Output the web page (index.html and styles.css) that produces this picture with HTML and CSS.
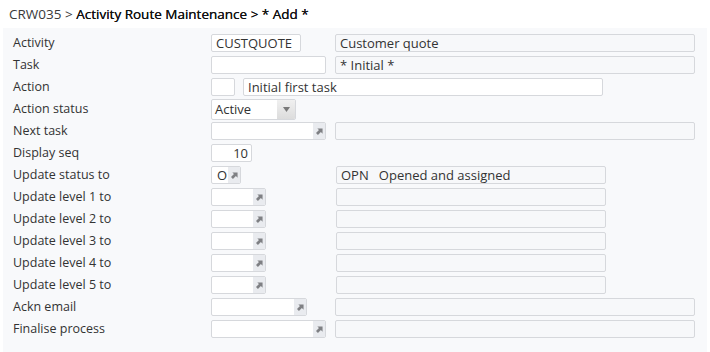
FILE: index.html
```html
<!DOCTYPE html>
<html>
<head>
<meta charset="utf-8">
<link rel="stylesheet" href="styles.css">
</head>
<body>
<div class="crumb"><span class="prog">CRW035 &gt;</span> <span class="title">Activity Route Maintenance &gt; * Add *</span></div>
<div class="panel">
  <div class="row"><div class="lbl">Activity</div><div class="code"><div class="inp w90">CUSTQUOTE</div></div><div class="desc"><div class="ro w360">Customer quote</div></div></div>
  <div class="row"><div class="lbl">Task</div><div class="code"><div class="inp w115"></div></div><div class="desc"><div class="ro w360">* Initial *</div></div></div>
  <div class="row"><div class="lbl">Action</div><div class="span"><div class="inp w24"></div><div class="inp w360">Initial first task</div></div></div>
  <div class="row"><div class="lbl">Action status</div><div class="code"><div class="sel"><span class="seltext">Active</span><span class="selbtn"><svg width="7" height="5" viewBox="0 0 7 5"><path d="M0 0H7L3.5 5Z" fill="#7a7a7a"/></svg></span></div></div></div>
  <div class="row"><div class="lbl">Next task</div><div class="code"><div class="look w115"><span class="lt"></span><span class="lb"><svg class="arr" viewBox="0 0 8 8"><path d="M1.5 0.5H7.5V6.5L5.6 4.6 2.2 8 0 5.8 3.4 2.4Z"/></svg></span></div></div><div class="desc"><div class="ro w360"></div></div></div>
  <div class="row"><div class="lbl">Display seq</div><div class="code"><div class="inp w41 num">10</div></div></div>
  <div class="row"><div class="lbl">Update status to</div><div class="code"><div class="look w30"><span class="lt">O</span><span class="lb"><svg class="arr" viewBox="0 0 8 8"><path d="M1.5 0.5H7.5V6.5L5.6 4.6 2.2 8 0 5.8 3.4 2.4Z"/></svg></span></div></div><div class="desc"><div class="ro w270 sh">OPN&nbsp;&nbsp; Opened and assigned</div></div></div>
  <div class="row"><div class="lbl">Update level 1 to</div><div class="code"><div class="look w55"><span class="lt"></span><span class="lb"><svg class="arr" viewBox="0 0 8 8"><path d="M1.5 0.5H7.5V6.5L5.6 4.6 2.2 8 0 5.8 3.4 2.4Z"/></svg></span></div></div><div class="desc"><div class="ro w270 sh"></div></div></div>
  <div class="row"><div class="lbl">Update level 2 to</div><div class="code"><div class="look w55"><span class="lt"></span><span class="lb"><svg class="arr" viewBox="0 0 8 8"><path d="M1.5 0.5H7.5V6.5L5.6 4.6 2.2 8 0 5.8 3.4 2.4Z"/></svg></span></div></div><div class="desc"><div class="ro w270 sh"></div></div></div>
  <div class="row"><div class="lbl">Update level 3 to</div><div class="code"><div class="look w55"><span class="lt"></span><span class="lb"><svg class="arr" viewBox="0 0 8 8"><path d="M1.5 0.5H7.5V6.5L5.6 4.6 2.2 8 0 5.8 3.4 2.4Z"/></svg></span></div></div><div class="desc"><div class="ro w270 sh"></div></div></div>
  <div class="row"><div class="lbl">Update level 4 to</div><div class="code"><div class="look w55"><span class="lt"></span><span class="lb"><svg class="arr" viewBox="0 0 8 8"><path d="M1.5 0.5H7.5V6.5L5.6 4.6 2.2 8 0 5.8 3.4 2.4Z"/></svg></span></div></div><div class="desc"><div class="ro w270 sh"></div></div></div>
  <div class="row"><div class="lbl">Update level 5 to</div><div class="code"><div class="look w55"><span class="lt"></span><span class="lb"><svg class="arr" viewBox="0 0 8 8"><path d="M1.5 0.5H7.5V6.5L5.6 4.6 2.2 8 0 5.8 3.4 2.4Z"/></svg></span></div></div><div class="desc"><div class="ro w270 sh"></div></div></div>
  <div class="row"><div class="lbl">Ackn email</div><div class="code"><div class="look w96"><span class="lt"></span><span class="lb"><svg class="arr" viewBox="0 0 8 8"><path d="M1.5 0.5H7.5V6.5L5.6 4.6 2.2 8 0 5.8 3.4 2.4Z"/></svg></span></div></div><div class="desc"><div class="ro w360"></div></div></div>
  <div class="row"><div class="lbl">Finalise process</div><div class="code"><div class="look w115"><span class="lt"></span><span class="lb"><svg class="arr" viewBox="0 0 8 8"><path d="M1.5 0.5H7.5V6.5L5.6 4.6 2.2 8 0 5.8 3.4 2.4Z"/></svg></span></div></div><div class="desc"><div class="ro w360"></div></div></div>
</div>
</body>
</html>
```
FILE: styles.css
```css
html, body { margin: 0; padding: 0; background: #ffffff; }
body { font-family: "Open Sans", "DejaVu Sans", sans-serif; color: #333; }
.crumb { height: 28px; box-sizing: border-box; padding: 4px 0 0 9px; font-size: 13.5px; line-height: 20px; color: #222; }
.crumb .prog { color: #3a3a3a; }
.crumb .title { font-weight: 400; color: #111; text-shadow: 0 0 0.4px #111; }
.panel { margin: 0 3px; background: #f8f9fb; padding: 4px 0 0 10px; height: 324px; box-sizing: border-box; }
.row { display: grid; grid-template-columns: 198px 124px 360px; height: 22px; align-items: center; }
.lbl { font-size: 12.5px; color: #333; line-height: 22px; }
.code, .desc { display: flex; }
.span { grid-column: 2 / 4; display: flex; gap: 8px; }
.inp, .ro, .look, .sel { box-sizing: border-box; height: 18px; border: 1px solid #d6d8dc; border-radius: 2px; font-size: 13px; line-height: 16px; padding: 0 4px; color: #333; white-space: pre; overflow: hidden; }
.inp { background: #fff; }
.ro { background: #f7f8fa; }
.ro.sh { margin-left: 1px; }
.num { text-align: right; padding-right: 3px; }
.look { display: flex; padding: 0; background: #fff; }
.lt { flex: 1; padding-left: 5px; }
.lb { width: 12px; background: #e9ebef; display: flex; align-items: center; justify-content: center; }
.arr { width: 7px; height: 7px; fill: #7f8084; }
.sel { width: 85px; height: 21px; display: flex; padding: 0; background: #fff; line-height: 19px; }
.seltext { flex: 1; padding-left: 3px; }
.selbtn { width: 18px; background: linear-gradient(#f0f0f0, #dcdcdc); display: flex; align-items: center; justify-content: center; }
.w24 { width: 24px; }
.w30 { width: 30px; }
.w41 { width: 41px; }
.w55 { width: 55px; }
.w90 { width: 90px; }
.w96 { width: 96px; }
.w115 { width: 115px; }
.w270 { width: 270px; }
.w360 { width: 360px; }
```
